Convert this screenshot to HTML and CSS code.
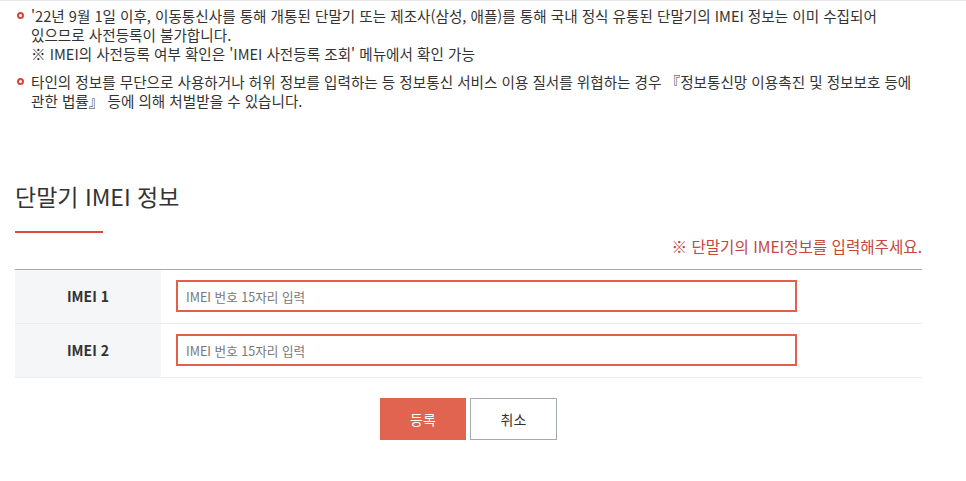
FILE: index.html
```html
<!DOCTYPE html>
<html lang="ko">
<head>
    <meta charset="UTF-8">
    <meta name="viewport" content="width=device-width, initial-scale=1.0">
    <title>단말기 IMEI 정보</title>
    <link rel="stylesheet" href="styles.css">
</head>
<body>
    <div class="page">
        <ul class="notice">
            <li>'22년 9월 1일 이후, 이동통신사를 통해 개통된 단말기 또는 제조사(삼성, 애플)를 통해 국내 정식 유통된 단말기의 IMEI 정보는 이미 수집되어<br>있으므로 사전등록이 불가합니다.<br>※ IMEI의 사전등록 여부 확인은 'IMEI 사전등록 조회' 메뉴에서 확인 가능</li>
            <li>타인의 정보를 무단으로 사용하거나 허위 정보를 입력하는 등 정보통신 서비스 이용 질서를 위협하는 경우 『정보통신망 이용촉진 및 정보보호 등에<br>관한 법률』 등에 의해 처벌받을 수 있습니다.</li>
        </ul>

        <h2 class="section-title">단말기 IMEI 정보</h2>
        <p class="guide">※ 단말기의 IMEI정보를 입력해주세요.</p>

        <table class="form-table">
            <tbody>
                <tr>
                    <th>IMEI 1</th>
                    <td><input type="text" class="imei-input" placeholder="IMEI 번호 15자리 입력" maxlength="15"></td>
                </tr>
                <tr>
                    <th>IMEI 2</th>
                    <td><input type="text" class="imei-input" placeholder="IMEI 번호 15자리 입력" maxlength="15"></td>
                </tr>
            </tbody>
        </table>

        <div class="btn-area">
            <button class="btn btn-primary">등록</button>
            <button class="btn btn-default">취소</button>
        </div>
    </div>
</body>
</html>
```

FILE: styles.css
```css
body {
    font-family: "Noto Sans CJK KR", "Noto Sans", sans-serif;
    margin: 0;
    padding: 0;
    color: #333;
    background-color: #fff;
    border-top: 1px solid #e8e8e8;
}
.page {
    padding: 0 44px 0 15px;
}
.notice {
    list-style: none;
    margin: 0;
    padding: 5px 0 0 16px;
    font-size: 14.6px;
    line-height: 19px;
    color: #333;
    white-space: nowrap;
}
.notice li {
    position: relative;
    margin-bottom: 9px;
}
.notice li::before {
    content: "";
    position: absolute;
    left: -14px;
    top: 6px;
    width: 3px;
    height: 3px;
    border: 2px solid #d9453a;
    border-radius: 50%;
}
.section-title {
    margin: 69px 0 0;
    padding-bottom: 20px;
    font-size: 23px;
    font-weight: normal;
    line-height: 34px;
    color: #333;
    position: relative;
}
.section-title::after {
    content: "";
    position: absolute;
    left: 0;
    bottom: 0;
    width: 88px;
    height: 2px;
    background-color: #d94a3a;
}
.guide {
    margin: 2px 0 0;
    text-align: right;
    font-size: 15.6px;
    line-height: 22px;
    color: #c4463c;
}
.form-table {
    width: 100%;
    margin-top: 12px;
    border-collapse: collapse;
    border-top: 1px solid #aaa;
}
.form-table th,
.form-table td {
    padding: 10px 0 11px;
    border-bottom: 1px solid #ececec;
}
.form-table th {
    width: 146px;
    background-color: #f5f6f8;
    font-size: 14px;
    font-weight: bold;
    color: #333;
    text-align: center;
}
.form-table td {
    padding-left: 15px;
}
.imei-input {
    display: block;
    box-sizing: border-box;
    width: 621px;
    height: 32px;
    margin: 0;
    padding: 0 8px;
    border: 2px solid #e2604b;
    font-family: inherit;
    font-size: 12.6px;
    color: #333;
    outline: none;
}
.imei-input::placeholder {
    color: #777;
}
.btn-area {
    display: flex;
    justify-content: center;
    gap: 4px;
    margin-top: 20px;
}
.btn {
    box-sizing: border-box;
    height: 42px;
    font-family: inherit;
    font-size: 14px;
    cursor: pointer;
}
.btn-primary {
    width: 86px;
    background-color: #e0644f;
    border: 1px solid #e0644f;
    color: #fff;
}
.btn-default {
    width: 87px;
    background-color: #fff;
    border: 1px solid #a3a9b1;
    color: #333;
}
```
